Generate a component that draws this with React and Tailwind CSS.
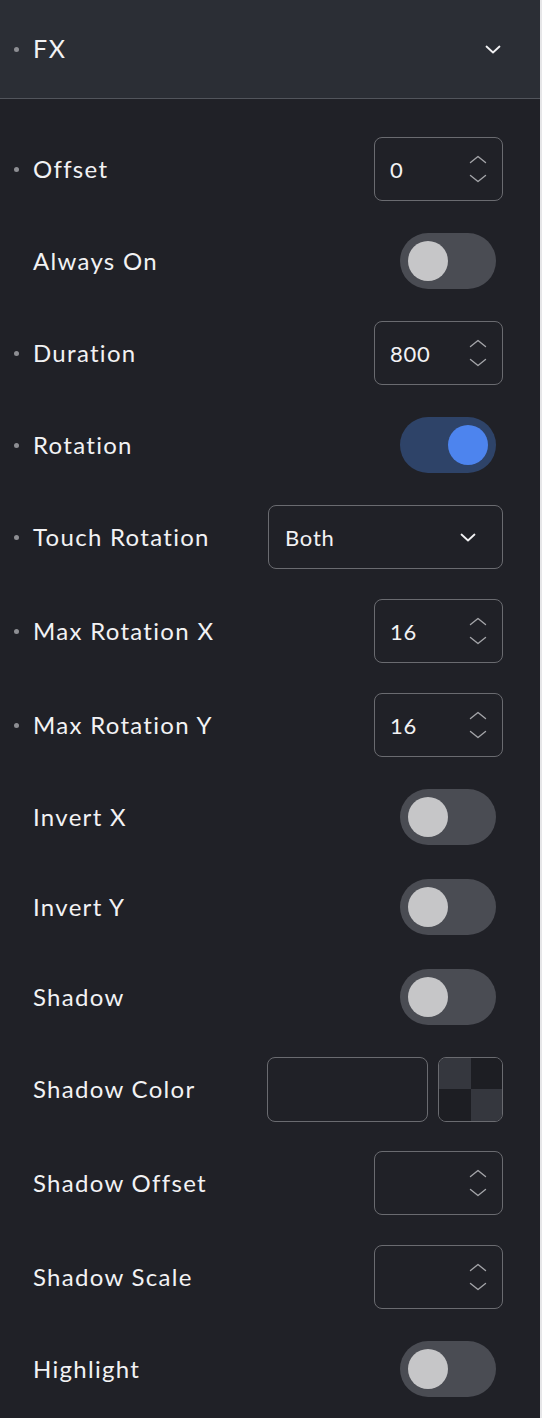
import React, { useState } from "react";

const font = { fontFamily: "Lato, 'Open Sans', sans-serif" };

function Dot({ show }) {
  return (
    <span className="w-[33px] shrink-0 flex items-center">
      {show && <span className="ml-[14px] w-[5px] h-[5px] rounded-full bg-[#8d8e93]" />}
    </span>
  );
}

function Chevron({ className }) {
  return (
    <svg viewBox="0 0 16 9" className={className} fill="none" stroke="currentColor" strokeWidth="1.8" strokeLinecap="round" strokeLinejoin="round">
      <path d="M1.5 1.5 L8 7.5 L14.5 1.5" />
    </svg>
  );
}

function NumberBox({ value }) {
  return (
    <div className="w-[129px] h-[64px] rounded-[8px] border border-[#6a6b70] flex items-center pl-[15px] pr-[15px]">
      <span className="flex-1 text-[22px] text-[#f2f2f4] tracking-[0.8px]">{value}</span>
      <div className="flex flex-col gap-[10px] text-[#a3a4a8]">
        <svg viewBox="0 0 18 9" className="w-[18px] h-[9px] rotate-180" fill="none" stroke="currentColor" strokeWidth="1.4" strokeLinecap="round" strokeLinejoin="round">
          <path d="M1.5 1.5 L9 7.5 L16.5 1.5" />
        </svg>
        <svg viewBox="0 0 18 9" className="w-[18px] h-[9px]" fill="none" stroke="currentColor" strokeWidth="1.4" strokeLinecap="round" strokeLinejoin="round">
          <path d="M1.5 1.5 L9 7.5 L16.5 1.5" />
        </svg>
      </div>
    </div>
  );
}

function Toggle({ on, onClick }) {
  return (
    <button
      onClick={onClick}
      className={
        "w-[96px] h-[56px] rounded-full flex items-center px-[8px] mr-[7px] " +
        (on ? "bg-[#2e4368] justify-end" : "bg-[#4a4c53] justify-start")
      }
    >
      <span className={"w-[40px] h-[40px] rounded-full " + (on ? "bg-[#4d84ee]" : "bg-[#c6c6c8]")} />
    </button>
  );
}

function Row({ label, dot, tall, children }) {
  return (
    <div className={"flex items-center justify-between pr-[37px] " + (tall ? "h-[64px]" : "h-[60px]")}>
      <div className="flex items-center">
        <Dot show={dot} />
        <span className="text-[24px] text-[#f2f2f4] tracking-[1.3px]">{label}</span>
      </div>
      {children}
    </div>
  );
}

export default function App() {
  const [toggles, setToggles] = useState({
    alwaysOn: false,
    rotation: true,
    invertX: false,
    invertY: false,
    shadow: false,
    highlight: false,
  });
  const flip = (k) => setToggles((t) => ({ ...t, [k]: !t[k] }));

  return (
    <div className="bg-[#e6e6e8] min-h-[1418px]" style={font}>
      <div className="w-[540px] min-h-[1418px] bg-[#202127]">
        <div className="h-[99px] bg-[#2b2e35] border-b border-[#52555c] flex items-center justify-between pr-[39px]">
          <div className="flex items-center">
            <Dot show />
            <span className="text-[25px] text-[#f2f2f4] tracking-[1.5px]">FX</span>
          </div>
          <Chevron className="w-[16px] h-[9px] text-[#f2f2f4]" />
        </div>
        <div className="pt-[38px] pb-[20px] flex flex-col gap-[30px]">
          <Row label="Offset" dot tall>
            <NumberBox value="0" />
          </Row>
          <Row label="Always On">
            <Toggle on={toggles.alwaysOn} onClick={() => flip("alwaysOn")} />
          </Row>
          <Row label="Duration" dot tall>
            <NumberBox value="800" />
          </Row>
          <Row label="Rotation" dot>
            <Toggle on={toggles.rotation} onClick={() => flip("rotation")} />
          </Row>
          <Row label="Touch Rotation" dot tall>
            <div className="w-[235px] h-[64px] rounded-[8px] border border-[#6a6b70] flex items-center justify-between pl-[16px] pr-[26px]">
              <span className="text-[22px] text-[#f2f2f4] tracking-[0.8px]">Both</span>
              <Chevron className="w-[16px] h-[9px] text-[#f2f2f4]" />
            </div>
          </Row>
          <Row label="Max Rotation X" dot tall>
            <NumberBox value="16" />
          </Row>
          <Row label="Max Rotation Y" dot tall>
            <NumberBox value="16" />
          </Row>
          <Row label="Invert X">
            <Toggle on={toggles.invertX} onClick={() => flip("invertX")} />
          </Row>
          <Row label="Invert Y">
            <Toggle on={toggles.invertY} onClick={() => flip("invertY")} />
          </Row>
          <Row label="Shadow">
            <Toggle on={toggles.shadow} onClick={() => flip("shadow")} />
          </Row>
          <Row label="Shadow Color" tall>
            <div className="flex items-center gap-[10px]">
              <div className="w-[161px] h-[65px] rounded-[8px] border border-[#6a6b70]" />
              <div className="w-[65px] h-[65px] rounded-[8px] border border-[#6a6b70] overflow-hidden grid grid-cols-2 grid-rows-2">
                <span className="bg-[#35373e]" />
                <span className="bg-[#1d1e23]" />
                <span className="bg-[#1d1e23]" />
                <span className="bg-[#35373e]" />
              </div>
            </div>
          </Row>
          <Row label="Shadow Offset" tall>
            <NumberBox value="" />
          </Row>
          <Row label="Shadow Scale" tall>
            <NumberBox value="" />
          </Row>
          <Row label="Highlight">
            <Toggle on={toggles.highlight} onClick={() => flip("highlight")} />
          </Row>
        </div>
      </div>
    </div>
  );
}
